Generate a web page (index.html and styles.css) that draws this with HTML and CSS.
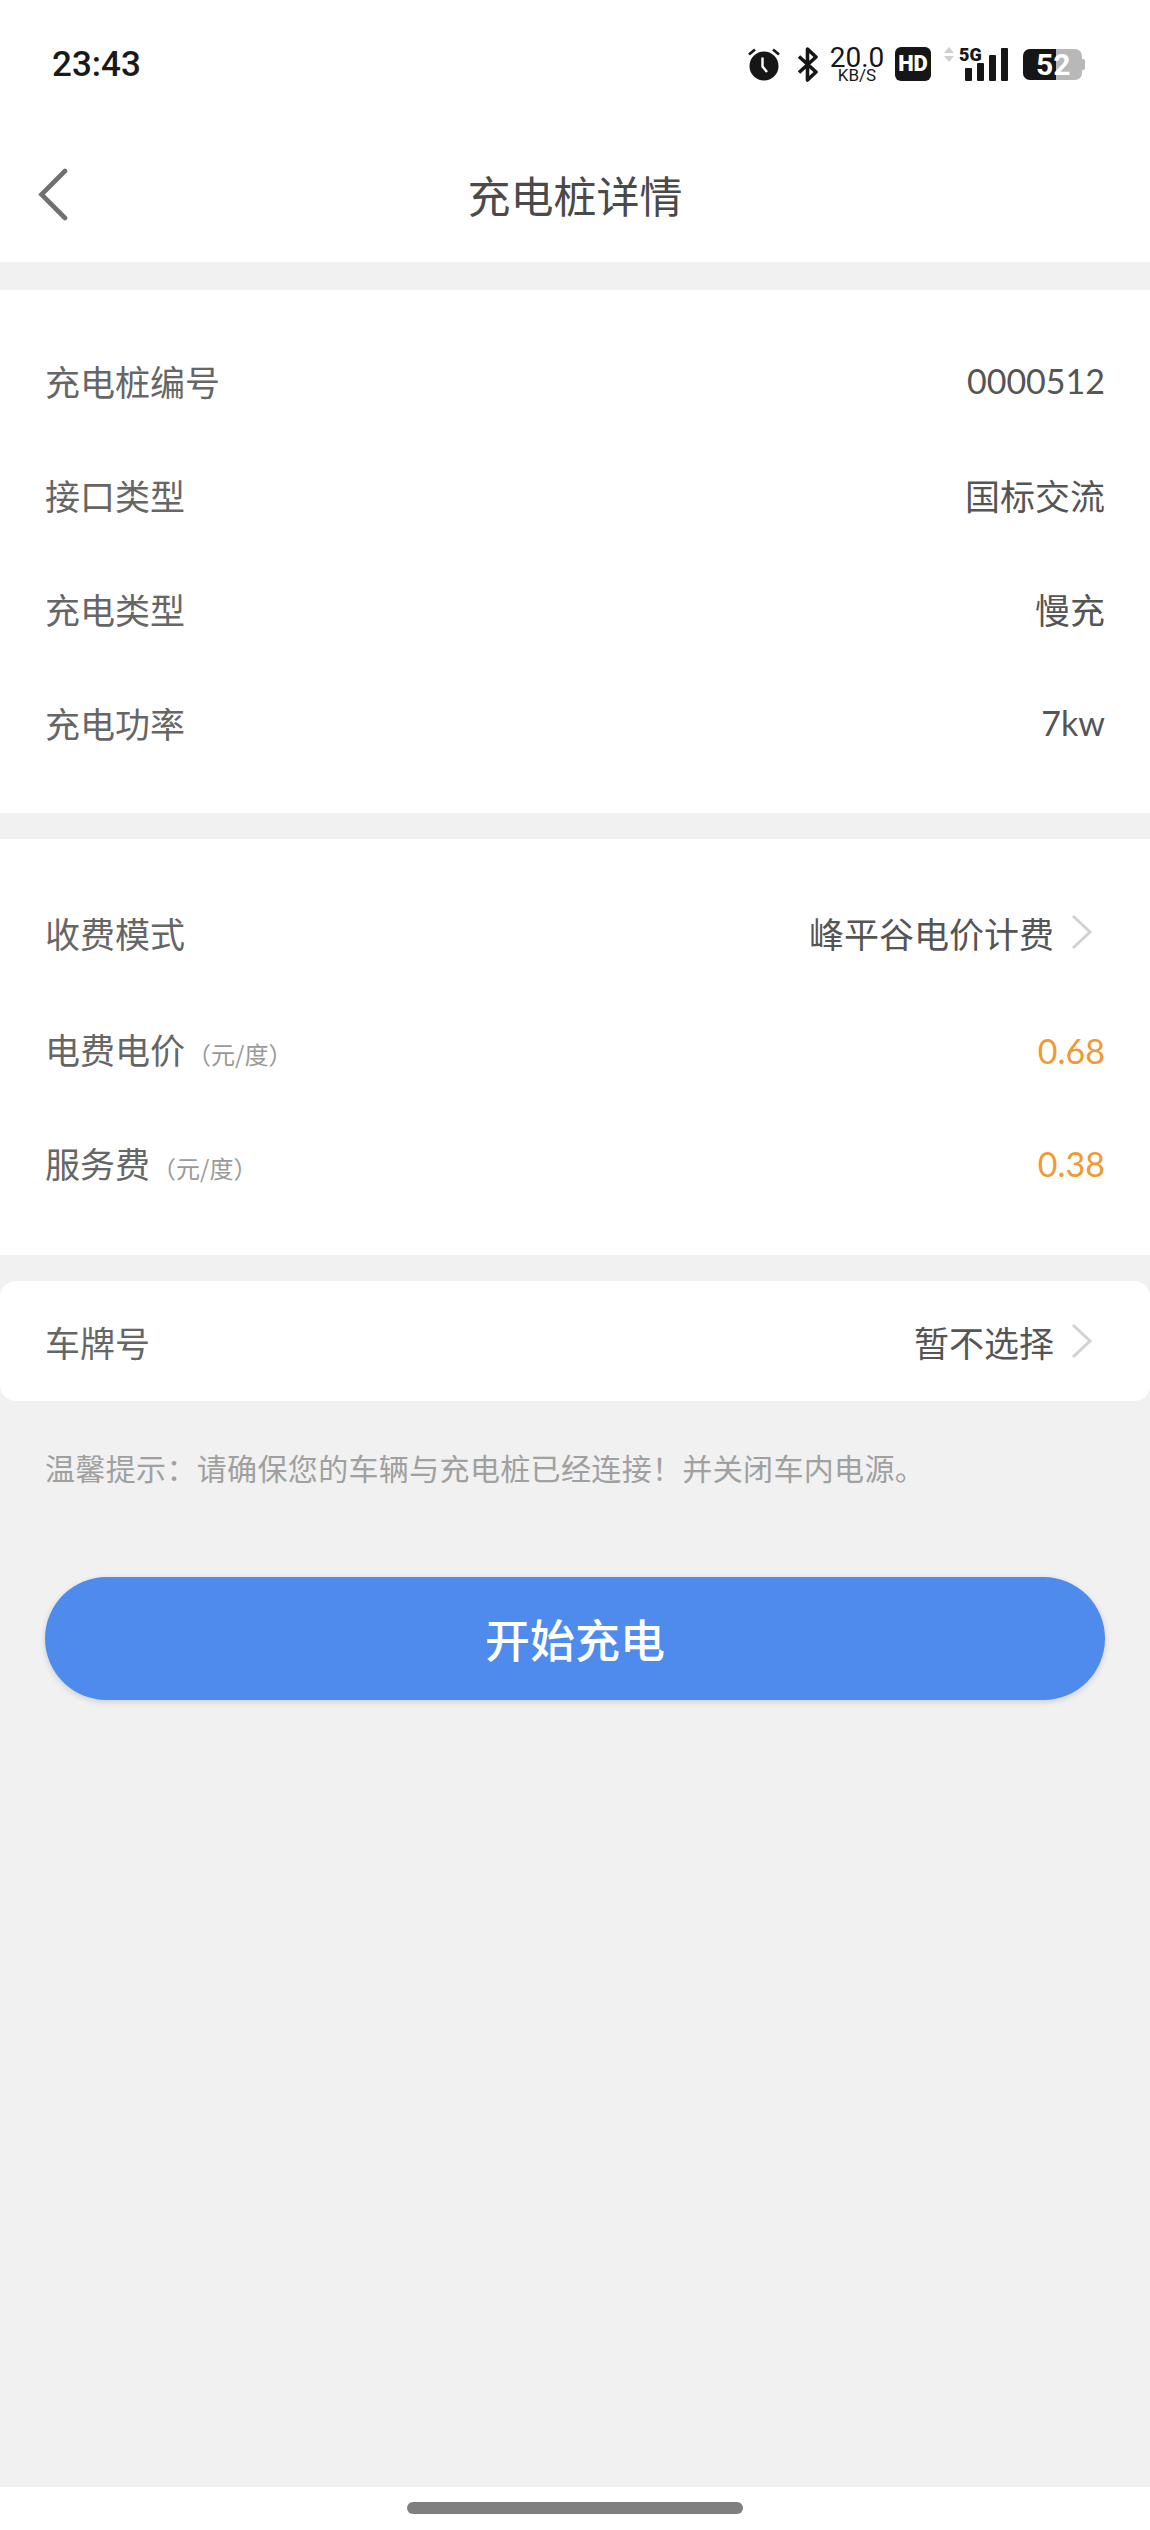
FILE: index.html
```html
<!DOCTYPE html>
<html lang="zh-CN">
<head>
	<meta charset="UTF-8">
	<title>充电桩详情</title>
	<link rel="stylesheet" href="styles.css">
</head>
<body>
	<div class="page">
		<div class="top">
			<div class="status">
				<span class="time">23:43</span>
				<div class="status-icons">
					<svg class="ic-alarm" width="34" height="34" viewBox="0 0 34 34">
						<circle cx="17" cy="19" r="14.5" fill="#161616"/>
						<path d="M2 7.5 8 2.500M32 7.500 26 2.500" stroke="#161616" stroke-width="2.600" fill="none"/>
						<path d="M15.500 10.500V19.500L20 25" stroke="#fff" stroke-width="2.400" fill="none"/>
					</svg>
					<svg class="ic-bt" width="22" height="35" viewBox="0 0 22 35">
						<path d="M2 9.500 19 25 10.500 33V2L19 10 2 25.500" stroke="#161616" stroke-width="3.600" fill="none" stroke-linejoin="round"/>
					</svg>
					<div class="speed">
						<span class="speed-num">20.0</span>
						<span class="speed-unit">KB/S</span>
					</div>
					<span class="hd">HD</span>
					<div class="signal">
						<svg class="ic-arrows" width="10" height="15" viewBox="0 0 10 15">
							<path d="M5 0 10 6H0ZM0 9H10L5 15Z" fill="#d0d0d0"/>
						</svg>
						<span class="net">5G</span>
						<div class="bars">
							<i class="bar b1"></i>
							<i class="bar b2"></i>
							<i class="bar b3"></i>
							<i class="bar b4"></i>
						</div>
					</div>
					<div class="battery">
						<div class="battery-fill"></div>
						<span class="battery-num">52</span>
					</div>
				</div>
			</div>
			<div class="nav">
				<svg class="back" width="30" height="54" viewBox="0 0 30 54">
					<path d="M27 3 3.500 26.500 27 50" stroke="#707070" stroke-width="4.600" fill="none" stroke-linecap="round" stroke-linejoin="miter"/>
				</svg>
				<span class="title">充电桩详情</span>
			</div>
		</div>

		<div class="card card-a">
			<div class="row"><span class="label">充电桩编号</span><span class="value num">0000512</span></div>
			<div class="row"><span class="label">接口类型</span><span class="value">国标交流</span></div>
			<div class="row"><span class="label">充电类型</span><span class="value">慢充</span></div>
			<div class="row"><span class="label">充电功率</span><span class="value num">7kw</span></div>
		</div>

		<div class="card card-b">
			<div class="row">
				<span class="label">收费模式</span>
				<div class="value-link">
					<span class="value">峰平谷电价计费</span>
					<svg class="arrow" width="22" height="36" viewBox="0 0 22 36"><path d="M2 2 19 18 2 34" stroke="#d2d2d2" stroke-width="3" fill="none"/></svg>
				</div>
			</div>
			<div class="row">
				<span class="label">电费电价<small class="unit">（元/度）</small></span>
				<span class="value num price">0.68</span>
			</div>
			<div class="row">
				<span class="label">服务费<small class="unit">（元/度）</small></span>
				<span class="value num price">0.38</span>
			</div>
		</div>

		<div class="card card-c">
			<div class="row plate">
				<span class="label">车牌号</span>
				<div class="value-link">
					<span class="value">暂不选择</span>
					<svg class="arrow" width="22" height="36" viewBox="0 0 22 36"><path d="M2 2 19 18 2 34" stroke="#d2d2d2" stroke-width="3" fill="none"/></svg>
				</div>
			</div>
		</div>

		<p class="hint">温馨提示：请确保您的车辆与充电桩已经连接！并关闭车内电源。</p>

		<button class="start">开始充电</button>

		<div class="home">
			<div class="home-bar"></div>
		</div>
	</div>
</body>
</html>
```

FILE: styles.css
```css
*{
	margin:0;
	padding:0;
	box-sizing:border-box;
}
html,body{
	width:100%;
	height:100%;
}
body{
	background:#f1f1f1;
	font-family:"Noto Sans CJK SC","Noto Sans",sans-serif;
	overflow:hidden;
}
.page{
	width:1150px;
	height:2530px;
	display:flex;
	flex-direction:column;
}

/* 顶部 */
.top{
	height:262px;
	background:#fff;
	flex:none;
}
.status{
	height:110px;
	padding:0 66px 0 52px;
	display:flex;
	justify-content:space-between;
	align-items:flex-start;
}
.time{
	margin-top:42px;
	font-family:Roboto,sans-serif;
	font-size:35px;
	line-height:46px;
	font-weight:500;
	color:#1a1a1a;
}
.status-icons{
	margin-top:47px;
	display:flex;
	align-items:flex-start;
	color:#161616;
}
.ic-alarm{
	display:block;
}
.ic-bt{
	display:block;
	margin-left:16px;
}
.speed{
	margin-left:11px;
	width:54px;
	display:flex;
	flex-direction:column;
	align-items:center;
	font-family:Roboto,sans-serif;
}
.speed-num{
	font-size:28px;
	line-height:21px;
}
.speed-unit{
	font-size:17px;
	line-height:15px;
}
.hd{
	margin-left:11px;
	width:36px;
	height:34px;
	border-radius:6px;
	background:#161616;
	color:#fff;
	font-family:Roboto,sans-serif;
	font-size:22px;
	font-weight:900;
	line-height:34px;
	text-align:center;
}
.signal{
	position:relative;
	margin-left:13px;
	width:64px;
	height:34px;
}
.ic-arrows{
	position:absolute;
	left:0;
	top:0;
}
.net{
	position:absolute;
	left:15px;
	top:-1px;
	font-family:Roboto,sans-serif;
	font-size:18px;
	line-height:17px;
	font-weight:900;
}
.bars{
	position:absolute;
	right:0;
	bottom:0;
	display:flex;
	align-items:flex-end;
	gap:5px;
}
.bar{
	display:block;
	width:7px;
	background:#161616;
	border-radius:1px;
}
.b1{height:13px;}
.b2{height:18px;}
.b3{height:26px;}
.b4{height:33px;}
.battery{
	position:relative;
	margin-left:15px;
	margin-right:2px;
	width:59px;
	height:31px;
	margin-top:2px;
	border-radius:7px;
	background:#b8b8b8;
}
.battery::after{
	content:"";
	position:absolute;
	left:59px;
	top:10px;
	width:3px;
	height:11px;
	border-radius:0 2px 2px 0;
	background:#b8b8b8;
}
.battery-fill{
	width:33px;
	height:100%;
	background:#161616;
	border-radius:7px 0 0 7px;
}
.battery-num{
	position:absolute;
	left:13px;
	top:0;
	font-family:Roboto,sans-serif;
	font-size:30px;
	line-height:31px;
	font-weight:700;
	color:#fff;
}
.nav{
	position:relative;
	height:152px;
	display:flex;
	align-items:center;
	justify-content:center;
}
.back{
	position:absolute;
	left:38px;
	top:58px;
}
.title{
	font-size:43px;
	color:#4a4a4a;
	margin-top:16px;
}

/* 列表 */
.card{
	background:#fff;
	flex:none;
}
.card-a{
	margin-top:28px;
	height:523px;
	padding:33px 45px 0;
}
.card-b{
	margin-top:26px;
	height:416px;
	padding:33px 45px 0;
}
.card-c{
	margin-top:26px;
	height:120px;
	padding:0 45px;
	border-radius:16px;
}
.row{
	height:114px;
	display:flex;
	justify-content:space-between;
	align-items:center;
}
.card-b .row:first-child{
	height:120px;
}
.card-b .row:nth-child(2){
	height:113px;
}
.card-c .plate{
	height:120px;
}
.label{
	font-size:35px;
	color:#666;
}
.unit{
	font-size:24px;
	color:#999;
	margin-left:2px;
}
.value{
	font-size:35px;
	color:#555;
}
.num{
	font-family:Lato,"Noto Sans",sans-serif;
	font-size:34px;
}
.price{
	color:#ef9a32;
	margin-top:3px;
}
.value-link{
	display:flex;
	align-items:center;
}
.arrow{
	display:block;
	margin-left:17px;
	margin-right:12px;
}

/* 底部 */
.hint{
	margin-top:44px;
	padding-left:45px;
	font-size:30px;
	letter-spacing:.35px;
	line-height:44px;
	color:#a0a0a0;
}
.start{
	margin:88px 45px 0;
	height:123px;
	flex:none;
	border:0;
	border-radius:62px;
	background:#4f8bec;
	color:#fff;
	font-family:inherit;
	font-size:45px;
	font-weight:500;
	box-shadow:0 2px 6px rgba(0,0,0,.15);
}
.home{
	margin-top:auto;
	height:43px;
	background:#fff;
	flex:none;
	display:flex;
	justify-content:center;
	padding-top:15px;
}
.home-bar{
	width:336px;
	height:12px;
	border-radius:6px;
	background:#7f7f7f;
}
```
